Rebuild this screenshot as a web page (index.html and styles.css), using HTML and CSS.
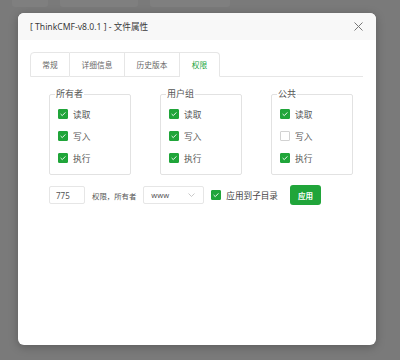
FILE: index.html
```html
<!DOCTYPE html>
<html lang="zh-CN">
<head>
    <meta charset="UTF-8">
    <meta name="viewport" content="width=device-width, initial-scale=1.0">
    <title>文件属性</title>
    <link rel="stylesheet" href="styles.css">
</head>
<body>
    <div class="backdrop">
        <span class="ghost ghost-a"></span>
        <span class="ghost ghost-b"></span>
        <span class="ghost ghost-c"></span>
    </div>

    <div class="dialog">
        <div class="dialog-header">
            <span class="dialog-title">[ ThinkCMF-v8.0.1 ] - 文件属性</span>
            <button class="close-btn" aria-label="关闭">
                <svg width="9" height="9" viewBox="0 0 9 9"><path d="M0.5 0.5 L8.5 8.5 M8.5 0.5 L0.5 8.5" stroke="#777" stroke-width="1" fill="none"/></svg>
            </button>
        </div>

        <div class="dialog-body">
            <div class="tabs">
                <div class="tab tab-first">常规</div>
                <div class="tab tab-wide">详细信息</div>
                <div class="tab tab-wide">历史版本</div>
                <div class="tab tab-last active">权限</div>
                <div class="tab-rest"></div>
            </div>

            <div class="perm-panel">
                <div class="groups">
                    <fieldset class="group">
                        <legend>所有者</legend>
                        <label class="check-row"><span class="box on"></span>读取</label>
                        <label class="check-row"><span class="box on"></span>写入</label>
                        <label class="check-row"><span class="box on"></span>执行</label>
                    </fieldset>
                    <fieldset class="group">
                        <legend>用户组</legend>
                        <label class="check-row"><span class="box on"></span>读取</label>
                        <label class="check-row"><span class="box on"></span>写入</label>
                        <label class="check-row"><span class="box on"></span>执行</label>
                    </fieldset>
                    <fieldset class="group">
                        <legend>公共</legend>
                        <label class="check-row"><span class="box on"></span>读取</label>
                        <label class="check-row"><span class="box"></span>写入</label>
                        <label class="check-row"><span class="box on"></span>执行</label>
                    </fieldset>
                </div>

                <div class="apply-row">
                    <div class="mode-input">775</div>
                    <span class="owner-label">权限，所有者</span>
                    <div class="owner-select">
                        <span>www</span>
                        <svg width="7" height="4" viewBox="0 0 7 4"><path d="M0.5 0.5 L3.5 3.5 L6.5 0.5" stroke="#bbb" stroke-width="0.8" fill="none"/></svg>
                    </div>
                    <label class="check-row sub-check"><span class="box on"></span>应用到子目录</label>
                    <button class="apply-btn">应用</button>
                </div>
            </div>
        </div>
    </div>
</body>
</html>
```

FILE: styles.css
```css
* {
    margin: 0;
    padding: 0;
    box-sizing: border-box;
}

body {
    width: 400px;
    height: 360px;
    overflow: hidden;
    background-color: #7a7a7a;
    font-family: "Noto Sans", "Noto Sans CJK SC", sans-serif;
    color: #333;
}

/* dimmed page behind the overlay */
.backdrop {
    height: 8px;
    display: flex;
    gap: 12px;
    padding-left: 12px;
}

.ghost {
    height: 7px;
    background-color: #7f7f7f;
    border-radius: 0 0 3px 3px;
}

.ghost-a { width: 36px; }
.ghost-b { width: 78px; }
.ghost-c { width: 80px; }

.dialog {
    width: 358px;
    height: 332px;
    margin: 5px 0 0 18px;
    background-color: #fff;
    border-radius: 6px;
    box-shadow: 0 2px 10px rgba(0, 0, 0, 0.25);
    overflow: hidden;
}

.dialog-header {
    height: 27px;
    background-color: #f8f8f8;
    display: flex;
    align-items: center;
    justify-content: space-between;
    padding: 0 13px 0 12px;
}

.dialog-title {
    font-size: 8.6px;
    line-height: 12px;
    color: #3a3a3a;
}

.close-btn {
    background: none;
    border: none;
    width: 9px;
    height: 9px;
    display: flex;
    cursor: pointer;
}

.dialog-body {
    padding: 12px 13px 0 12px;
}

.tabs {
    display: flex;
    height: 25px;
}

.tab {
    width: 40px;
    border: 1px solid #e6e6e6;
    border-left: none;
    font-size: 7.7px;
    color: #666;
    display: flex;
    align-items: center;
    justify-content: center;
}

.tab-wide { width: 55px; }

.tab-first {
    border-left: 1px solid #e6e6e6;
    border-top-left-radius: 4px;
}

.tab-last { border-top-right-radius: 4px; }

.tab.active {
    color: #20a53a;
    border-bottom-color: #fff;
}

.tab-rest {
    flex: 1;
    border-bottom: 1px solid #e6e6e6;
}

.perm-panel {
    padding: 12px 0 0 19px;
}

.groups {
    display: flex;
    gap: 29px;
}

.group {
    width: 82px;
    height: 86px;
    border: 1px solid #e2e2e2;
    border-radius: 2px;
    padding: 4px 8px 0 8px;
    display: flex;
    flex-direction: column;
}

.group legend {
    font-size: 9px;
    line-height: 10px;
    color: #555;
    padding: 0 1px;
    margin-left: -3px;
}

.check-row {
    height: 22px;
    display: flex;
    align-items: center;
    gap: 5px;
    font-size: 8.7px;
    color: #555;
}

.box {
    width: 10px;
    height: 10px;
    border: 1px solid #d2d2d2;
    border-radius: 1px;
    background-color: #fff;
    flex-shrink: 0;
}

.box.on {
    border-color: #20a53a;
    background: #20a53a url("data:image/svg+xml,%3Csvg xmlns='http://www.w3.org/2000/svg' width='10' height='10' viewBox='0 0 10 10'%3E%3Cpath d='M2.6 5 L4.3 6.6 L7.4 3.4' stroke='%23fff' stroke-width='0.9' fill='none'/%3E%3C/svg%3E") center / 10px 10px no-repeat;
}

.apply-row {
    display: flex;
    align-items: center;
    height: 20px;
    margin-top: 10px;
}

.mode-input {
    width: 36px;
    height: 18px;
    border: 1px solid #e6e6e6;
    border-radius: 2px;
    font-size: 8px;
    color: #555;
    padding-left: 6px;
    display: flex;
    align-items: center;
}

.owner-label {
    margin-left: 7px;
    font-size: 7.4px;
    color: #555;
}

.owner-select {
    width: 61px;
    height: 18px;
    margin-left: 7px;
    border: 1px solid #e6e6e6;
    border-radius: 2px;
    display: flex;
    align-items: center;
    justify-content: space-between;
    padding: 0 8px 0 7px;
    font-size: 7.5px;
    color: #555;
}

.sub-check {
    margin-left: 7px;
    font-size: 8.6px;
    color: #444;
}

.apply-btn {
    width: 31px;
    height: 20px;
    margin-left: 12px;
    background-color: #20a53a;
    color: #fff;
    border: none;
    border-radius: 3px;
    font-family: inherit;
    font-size: 7.5px;
    font-weight: bold;
    cursor: pointer;
}
```
